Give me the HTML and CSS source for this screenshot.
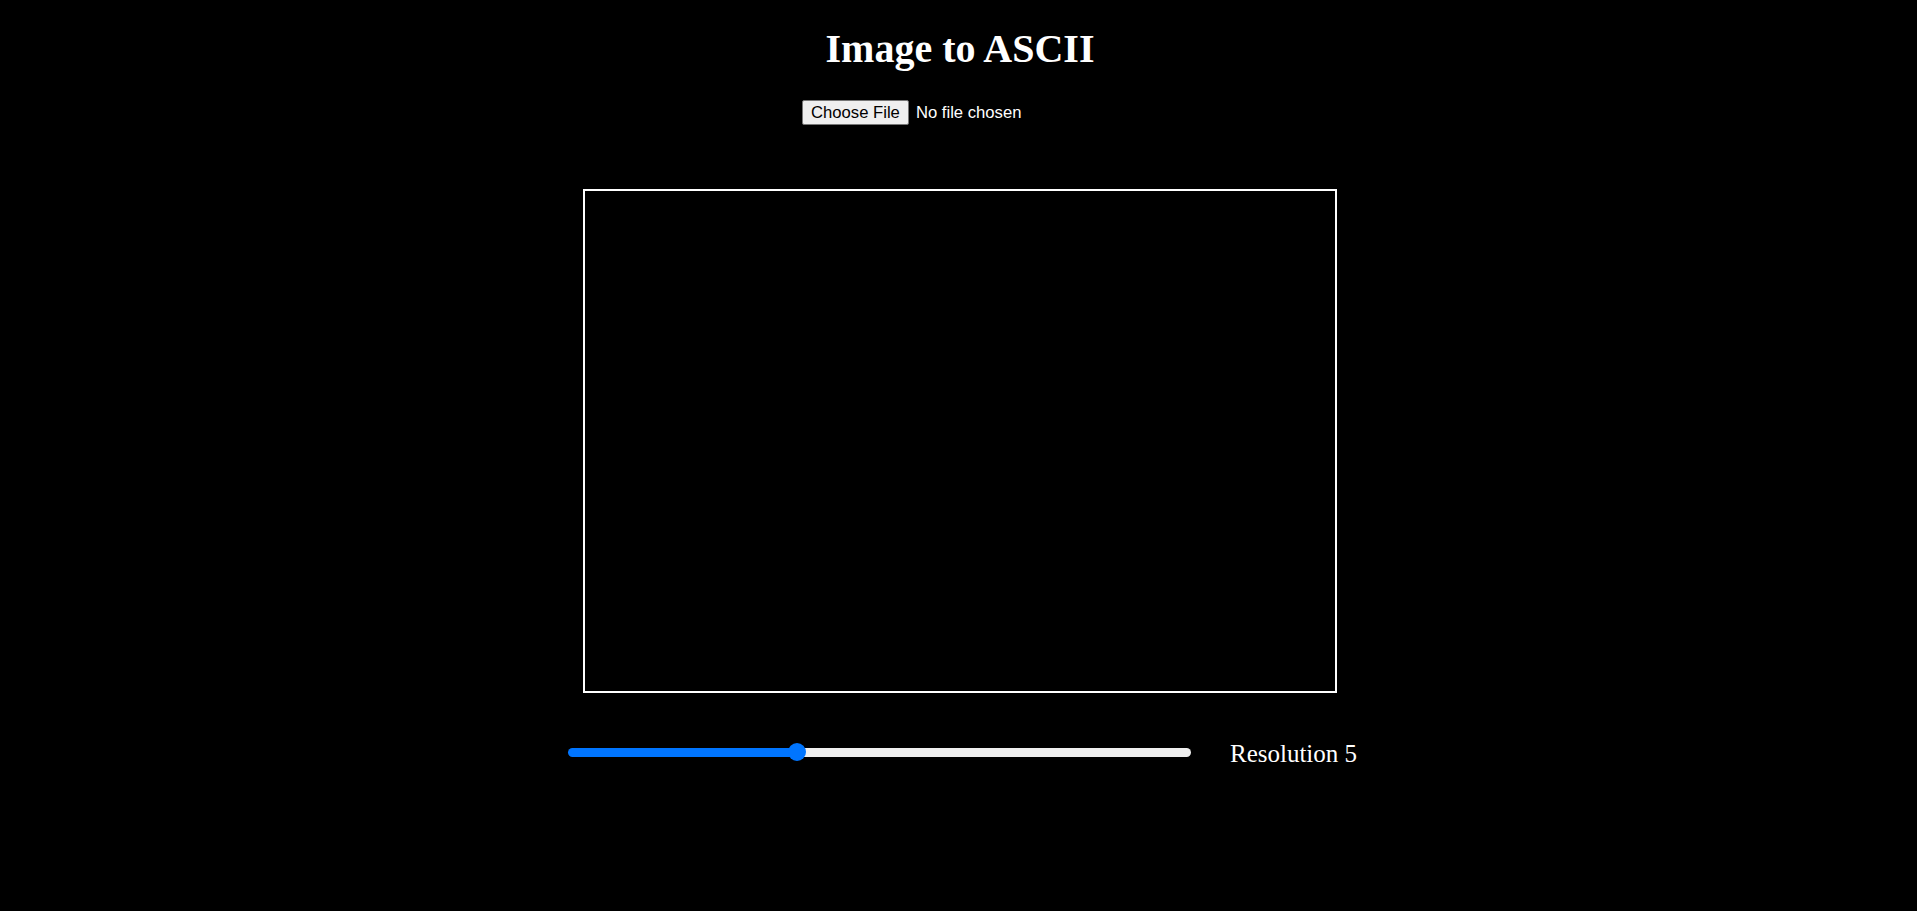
FILE: index.html
```html
<!DOCTYPE html>
<html>
<head>
<meta charset="utf-8">
<title>Image to ASCII</title>
<link rel="stylesheet" href="styles.css">
</head>
<body>
<main class="page">
  <h1 class="title">Image to ASCII</h1>
  <div class="upload">
    <input class="file" type="file" accept="image/*">
  </div>
  <canvas class="canvas" width="750" height="500"></canvas>
  <div class="controls">
    <input class="slider" type="range" min="1" max="12" value="5" style="--fill: 36.8%">
    <label class="res-label">Resolution 5</label>
  </div>
</main>
</body>
</html>
```

FILE: styles.css
```css
html, body {
  margin: 0;
  padding: 0;
  background: #000;
}

body {
  color: #fff;
  font-family: "Liberation Serif", "Times New Roman", serif;
}

.page {
  display: flex;
  flex-direction: column;
  align-items: center;
  padding-left: 3px;
}

.title {
  margin: 26px 0 0;
  font-size: 40px;
  font-weight: bold;
  line-height: 46px;
}

.upload {
  margin-top: 28px;
  width: 314px;
  margin-left: -2px;
}

.file {
  font-family: "Liberation Sans", Arial, sans-serif;
  font-size: 16.67px;
  color: #fff;
}

.file::file-selector-button {
  font-family: "Liberation Sans", Arial, sans-serif;
  font-size: 16.67px;
  color: #000;
  background: #efefef;
  border: 1px solid #767676;
  border-radius: 2px;
  padding: 1px 8px;
  margin-right: 7px;
  height: 25px;
}

.canvas {
  display: block;
  margin-top: 64px;
  width: 750px;
  height: 500px;
  border: 2px solid #fff;
}

.controls {
  display: flex;
  align-items: center;
  gap: 39px;
  margin-top: 43px;
  margin-left: 5px;
}

.slider {
  -webkit-appearance: none;
  appearance: none;
  width: 623px;
  height: 18px;
  margin: 0;
  background: transparent;
}

.slider::-webkit-slider-runnable-track {
  height: 9px;
  border-radius: 5px;
  background: linear-gradient(to right, #0075ff 0, #0075ff var(--fill), #efefef var(--fill), #efefef 100%);
}

.slider::-webkit-slider-thumb {
  -webkit-appearance: none;
  appearance: none;
  width: 18px;
  height: 18px;
  margin-top: -4.5px;
  border-radius: 50%;
  background: #0075ff;
  border: none;
}

.res-label {
  font-size: 25px;
  line-height: 29px;
  padding-top: 3px;
}
```
